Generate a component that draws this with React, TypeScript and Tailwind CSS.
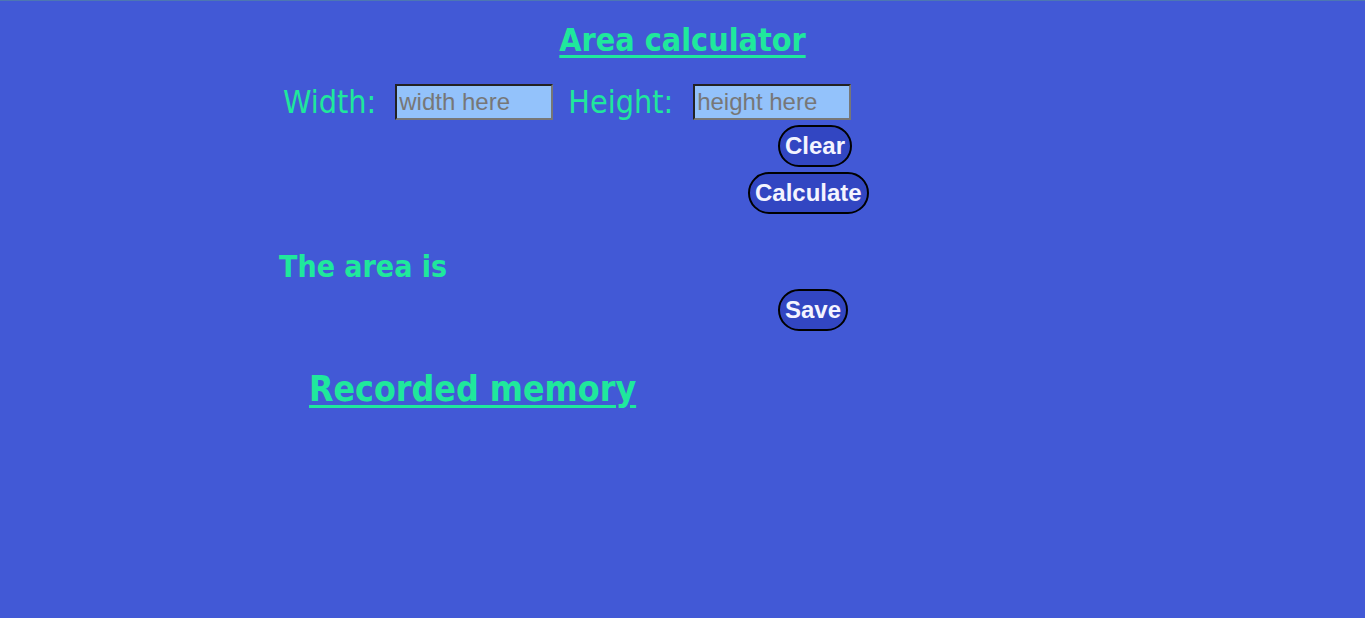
import React, { useState } from 'react';

const App: React.FC = () => {
  const [width, setWidth] = useState('');
  const [height, setHeight] = useState('');
  const [area, setArea] = useState('');

  const btn =
    'rounded-full border-2 border-black bg-[#3246c2] px-[5px] text-[24px] font-bold leading-[38px] text-[#f4f4ff] font-["Liberation_Sans",Arial,sans-serif]';
  const input =
    'h-[36px] w-[158px] border-2 border-t-[#222] border-l-[#222] border-b-[#777] border-r-[#777] bg-[#93c2fb] px-[2px] text-[24px] text-[#333] placeholder:text-[#777] outline-none font-["Liberation_Sans",Arial,sans-serif]';

  return (
    <div className='min-h-screen border-t border-[#4d77b2] bg-[#4259d6] font-["DejaVu_Sans_Condensed","DejaVu_Sans",sans-serif] text-[#1fe89c]'>
      <h1 className="pt-[19px] text-center text-[32px] font-bold leading-[40px] underline decoration-[3px] underline-offset-4">
        Area calculator
      </h1>

      <div className="flex flex-col pl-[279px] pt-[24px]">
        <div className="flex items-center">
          <span className="ml-[4px] mr-[19px] text-[32px] leading-[36px]">Width:</span>
          <input className={input} placeholder="width here" value={width} onChange={(e) => setWidth(e.target.value)} />
          <span className="ml-[15px] mr-[20px] text-[32px] leading-[36px]">Height:</span>
          <input className={input} placeholder="height here" value={height} onChange={(e) => setHeight(e.target.value)} />
        </div>

        <button
          className={`${btn} ml-[499px] mt-[5px] self-start`}
          onClick={() => {
            setWidth('');
            setHeight('');
            setArea('');
          }}
        >
          Clear
        </button>
        <button
          className={`${btn} ml-[469px] mt-[5px] self-start`}
          onClick={() => setArea(String(Number(width) * Number(height)))}
        >
          Calculate
        </button>

        <p className="mt-[35px] text-[30px] font-bold leading-[36px]">The area is {area}</p>

        <button className={`${btn} ml-[499px] mt-[4px] self-start`}>Save</button>

        <h2 className="ml-[30px] mt-[36px] text-[35.4px] font-bold leading-[44px] underline decoration-[3px] underline-offset-4">
          Recorded memory
        </h2>
      </div>
    </div>
  );
};

export default App;
